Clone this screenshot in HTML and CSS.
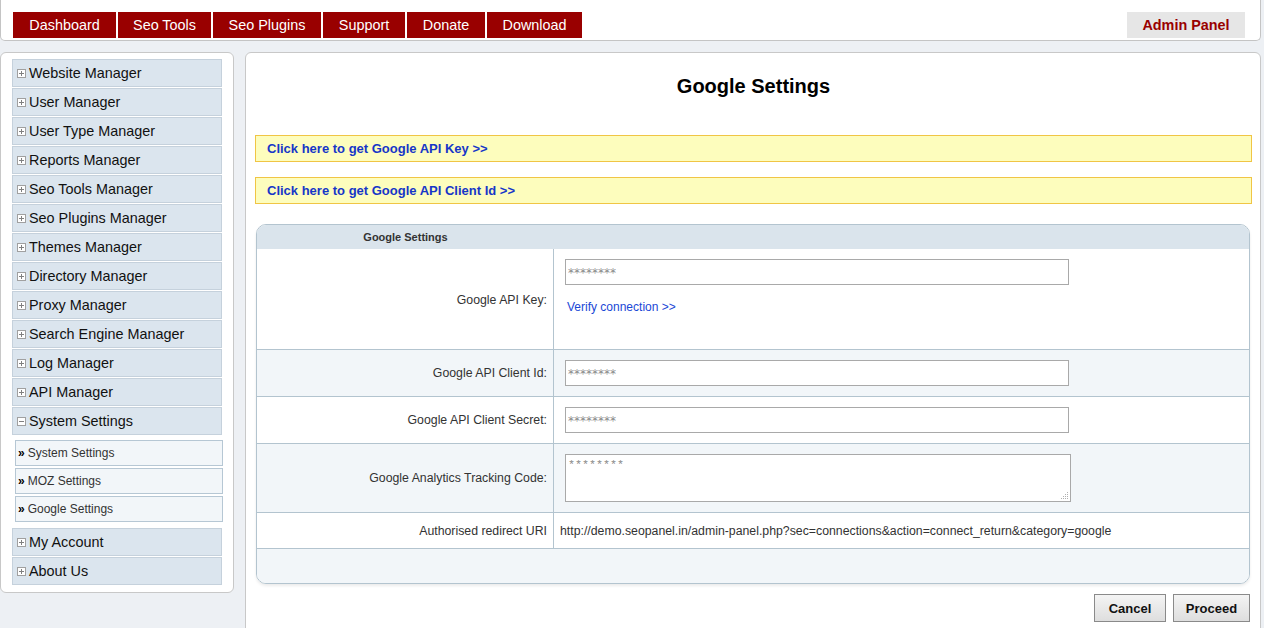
FILE: index.html
```html
<!DOCTYPE html>
<html>
<head>
<meta charset="utf-8">
<title>Google Settings</title>
<link rel="stylesheet" href="styles.css">
</head>
<body>
<div class="header">
  <nav class="tabs">
    <a class="tab" style="width:103px">Dashboard</a>
    <a class="tab" style="width:93px">Seo Tools</a>
    <a class="tab" style="width:108px">Seo Plugins</a>
    <a class="tab" style="width:82px">Support</a>
    <a class="tab" style="width:78px">Donate</a>
    <a class="tab" style="width:95px">Download</a>
  </nav>
  <div class="admin">Admin Panel</div>
</div>
<div class="layout">
  <aside class="sidebar">
    <div class="menu"><span class="ico"><svg width="9" height="9" viewBox="0 0 9 9"><rect x="0.5" y="0.5" width="8" height="8" fill="#fff" stroke="#a0a0a0"/><path d="M2 4.5h5M4.5 2v5" stroke="#808080"/></svg></span>Website Manager</div>
    <div class="menu"><span class="ico"><svg width="9" height="9" viewBox="0 0 9 9"><rect x="0.5" y="0.5" width="8" height="8" fill="#fff" stroke="#a0a0a0"/><path d="M2 4.5h5M4.5 2v5" stroke="#808080"/></svg></span>User Manager</div>
    <div class="menu"><span class="ico"><svg width="9" height="9" viewBox="0 0 9 9"><rect x="0.5" y="0.5" width="8" height="8" fill="#fff" stroke="#a0a0a0"/><path d="M2 4.5h5M4.5 2v5" stroke="#808080"/></svg></span>User Type Manager</div>
    <div class="menu"><span class="ico"><svg width="9" height="9" viewBox="0 0 9 9"><rect x="0.5" y="0.5" width="8" height="8" fill="#fff" stroke="#a0a0a0"/><path d="M2 4.5h5M4.5 2v5" stroke="#808080"/></svg></span>Reports Manager</div>
    <div class="menu"><span class="ico"><svg width="9" height="9" viewBox="0 0 9 9"><rect x="0.5" y="0.5" width="8" height="8" fill="#fff" stroke="#a0a0a0"/><path d="M2 4.5h5M4.5 2v5" stroke="#808080"/></svg></span>Seo Tools Manager</div>
    <div class="menu"><span class="ico"><svg width="9" height="9" viewBox="0 0 9 9"><rect x="0.5" y="0.5" width="8" height="8" fill="#fff" stroke="#a0a0a0"/><path d="M2 4.5h5M4.5 2v5" stroke="#808080"/></svg></span>Seo Plugins Manager</div>
    <div class="menu"><span class="ico"><svg width="9" height="9" viewBox="0 0 9 9"><rect x="0.5" y="0.5" width="8" height="8" fill="#fff" stroke="#a0a0a0"/><path d="M2 4.5h5M4.5 2v5" stroke="#808080"/></svg></span>Themes Manager</div>
    <div class="menu"><span class="ico"><svg width="9" height="9" viewBox="0 0 9 9"><rect x="0.5" y="0.5" width="8" height="8" fill="#fff" stroke="#a0a0a0"/><path d="M2 4.5h5M4.5 2v5" stroke="#808080"/></svg></span>Directory Manager</div>
    <div class="menu"><span class="ico"><svg width="9" height="9" viewBox="0 0 9 9"><rect x="0.5" y="0.5" width="8" height="8" fill="#fff" stroke="#a0a0a0"/><path d="M2 4.5h5M4.5 2v5" stroke="#808080"/></svg></span>Proxy Manager</div>
    <div class="menu"><span class="ico"><svg width="9" height="9" viewBox="0 0 9 9"><rect x="0.5" y="0.5" width="8" height="8" fill="#fff" stroke="#a0a0a0"/><path d="M2 4.5h5M4.5 2v5" stroke="#808080"/></svg></span>Search Engine Manager</div>
    <div class="menu"><span class="ico"><svg width="9" height="9" viewBox="0 0 9 9"><rect x="0.5" y="0.5" width="8" height="8" fill="#fff" stroke="#a0a0a0"/><path d="M2 4.5h5M4.5 2v5" stroke="#808080"/></svg></span>Log Manager</div>
    <div class="menu"><span class="ico"><svg width="9" height="9" viewBox="0 0 9 9"><rect x="0.5" y="0.5" width="8" height="8" fill="#fff" stroke="#a0a0a0"/><path d="M2 4.5h5M4.5 2v5" stroke="#808080"/></svg></span>API Manager</div>
    <div class="menu"><span class="ico"><svg width="9" height="9" viewBox="0 0 9 9"><rect x="0.5" y="0.5" width="8" height="8" fill="#fff" stroke="#a0a0a0"/><path d="M2 4.5h5" stroke="#808080"/></svg></span>System Settings</div>
    <div class="submenu">
      <div class="sub"><span class="raq">»</span>System Settings</div>
      <div class="sub"><span class="raq">»</span>MOZ Settings</div>
      <div class="sub"><span class="raq">»</span>Google Settings</div>
    </div>
    <div class="menu"><span class="ico"><svg width="9" height="9" viewBox="0 0 9 9"><rect x="0.5" y="0.5" width="8" height="8" fill="#fff" stroke="#a0a0a0"/><path d="M2 4.5h5M4.5 2v5" stroke="#808080"/></svg></span>My Account</div>
    <div class="menu"><span class="ico"><svg width="9" height="9" viewBox="0 0 9 9"><rect x="0.5" y="0.5" width="8" height="8" fill="#fff" stroke="#a0a0a0"/><path d="M2 4.5h5M4.5 2v5" stroke="#808080"/></svg></span>About Us</div>
  </aside>
  <main class="main">
    <h1 class="title">Google Settings</h1>
    <div class="notice"><a>Click here to get Google API Key &gt;&gt;</a></div>
    <div class="notice"><a>Click here to get Google API Client Id &gt;&gt;</a></div>
    <div class="form">
      <div class="row head"><div class="lab">Google Settings</div><div class="val"></div></div>
      <div class="row r1">
        <div class="lab">Google API Key:</div>
        <div class="val col">
          <div class="input">********</div>
          <a class="verify">Verify connection &gt;&gt;</a>
        </div>
      </div>
      <div class="row alt r2"><div class="lab">Google API Client Id:</div><div class="val"><div class="input">********</div></div></div>
      <div class="row r2"><div class="lab">Google API Client Secret:</div><div class="val"><div class="input">********</div></div></div>
      <div class="row alt r4"><div class="lab">Google Analytics Tracking Code:</div><div class="val"><div class="textarea">********<svg class="grip" width="9" height="9" viewBox="0 0 9 9"><g fill="#b0b0b0"><rect x="7" y="1" width="1" height="1"/><rect x="5" y="3" width="1" height="1"/><rect x="7" y="3" width="1" height="1"/><rect x="3" y="5" width="1" height="1"/><rect x="5" y="5" width="1" height="1"/><rect x="7" y="5" width="1" height="1"/><rect x="1" y="7" width="1" height="1"/><rect x="3" y="7" width="1" height="1"/><rect x="5" y="7" width="1" height="1"/><rect x="7" y="7" width="1" height="1"/></g></svg></div></div></div>
      <div class="row r5"><div class="lab">Authorised redirect URI</div><div class="val uri">http://demo.seopanel.in/admin-panel.php?sec=connections&amp;action=connect_return&amp;category=google</div></div>
      <div class="foot"></div>
    </div>
    <div class="actions">
      <button class="btn cancel">Cancel</button>
      <button class="btn proceed">Proceed</button>
    </div>
  </main>
</div>
</body>
</html>
```

FILE: styles.css
```css
* { box-sizing: border-box; }
html, body { margin: 0; padding: 0; }
body {
  background: #edf0f4;
  font-family: "Liberation Sans", Arial, sans-serif;
  color: #333;
  height: 628px;
  overflow: hidden;
}
.header {
  width: 1261px;
  height: 41px;
  background: #fff;
  border: 1px solid #c4c4c4;
  border-top: none;
  border-radius: 0 0 5px 5px;
  display: flex;
  justify-content: space-between;
  padding: 12px 15px 0 12px;
}
.tabs { display: flex; gap: 2px; }
.tab {
  height: 26px;
  background: #990000;
  color: #fff;
  font-size: 14.4px;
  display: flex;
  align-items: center;
  justify-content: center;
}
.admin {
  width: 118px;
  height: 26px;
  background: #e6e6e6;
  color: #990000;
  font-weight: bold;
  font-size: 14.4px;
  display: flex;
  align-items: center;
  justify-content: center;
}
.layout {
  display: flex;
  gap: 11px;
  margin-top: 11px;
  align-items: flex-start;
}
.sidebar {
  width: 234px;
  height: 541px;
  background: #fff;
  border: 1px solid #c8c8c8;
  border-radius: 6px;
  padding: 6px 0 0 11px;
}
.menu {
  width: 210px;
  height: 28px;
  margin-bottom: 1px;
  background: #dbe5ee;
  border: 1px solid #c5d1dc;
  display: flex;
  align-items: center;
  font-size: 14.4px;
  color: #111;
  padding-left: 4px;
}
.ico { display: flex; margin-right: 3px; margin-top: 1px; }
.submenu {
  padding: 4px 0 4px 3px;
  background: #fff;
}
.sub {
  width: 208px;
  height: 26px;
  margin-bottom: 2px;
  background: #f2f6f9;
  border: 1px solid #b6c7d4;
  display: flex;
  align-items: center;
  font-size: 12px;
  color: #333;
  padding-left: 2px;
}
.raq { font-weight: bold; color: #000; font-size: 12px; margin-right: 3px; }
.main {
  width: 1016px;
  height: 590px;
  background: #fff;
  border: 1px solid #c8c8c8;
  border-radius: 6px;
  padding: 0 8px 0 9px;
}
.title {
  margin: 0;
  padding-top: 21px;
  height: 82px;
  text-align: center;
  font-size: 20px;
  color: #000;
  font-weight: bold;
  line-height: 24px;
}
.notice {
  height: 27px;
  background: #fdfdbd;
  border: 1px solid #f0c545;
  display: flex;
  align-items: center;
  padding-left: 11px;
  margin-bottom: 15px;
  font-size: 13px;
  font-weight: bold;
}
.notice a { color: #1636c8; }
.form {
  margin: 20px 2px 0 1px;
  border: 1px solid #b3c4cf;
  border-radius: 10px;
  overflow: hidden;
  box-shadow: 0 2px 3px rgba(0,0,0,0.08);
}
.row {
  display: grid;
  grid-template-columns: 297px 1fr;
  border-bottom: 1px solid #b3c4cf;
  font-size: 12.3px;
  color: #333;
}
.row .lab {
  border-right: 1px solid #b3c4cf;
  display: flex;
  align-items: center;
  justify-content: flex-end;
  padding-right: 6px;
}
.row .val {
  display: flex;
  align-items: center;
  padding-left: 11px;
}
.row.head {
  height: 24px;
  background: #dae4ec;
  border-bottom: none;
  font-weight: bold;
  font-size: 11px;
}
.row.head .lab { justify-content: center; border-right: none; padding: 0; }
.row.alt { background: #f2f6f9; }
.r1 { height: 101px; background: #fff; }
.r1 .lab { padding-top: 2px; }
.val.col {
  flex-direction: column;
  align-items: flex-start;
  justify-content: flex-start;
  padding-top: 10px;
}
.r2 { height: 47px; }
.r4 { height: 69px; }
.r5 { height: 36px; }
.foot { height: 34px; background: #f2f6f9; }
.input {
  width: 504px;
  height: 26px;
  background: #fff;
  border: 1px solid #a9a9a9;
  color: #8a8a8a;
  font-family: "DejaVu Sans", sans-serif;
  font-size: 12px;
  display: flex;
  align-items: center;
  padding-left: 2px;
  padding-top: 1px;
}
.verify {
  color: #1a47d6;
  font-size: 12px;
  margin-top: 15px;
  margin-left: 2px;
}
.textarea {
  position: relative;
  width: 506px;
  height: 48px;
  background: #fff;
  border: 1px solid #a9a9a9;
  color: #8a8a8a;
  font-family: "Liberation Mono", monospace;
  font-size: 11.7px;
  padding: 3px 2px;
  line-height: 14px;
}
.grip { position: absolute; right: 1px; bottom: 1px; }
.uri { padding-left: 6px !important; }
.actions {
  display: flex;
  justify-content: flex-end;
  gap: 7px;
  margin: 10px 2px 0 0;
}
.btn {
  height: 28px;
  border: 1px solid #8a8a8a;
  background: linear-gradient(#f4f4f4, #dedede);
  font-family: "Liberation Sans", Arial, sans-serif;
  font-weight: bold;
  font-size: 13px;
  color: #111;
  padding: 0;
}
.cancel { width: 72px; }
.proceed { width: 77px; }
```
